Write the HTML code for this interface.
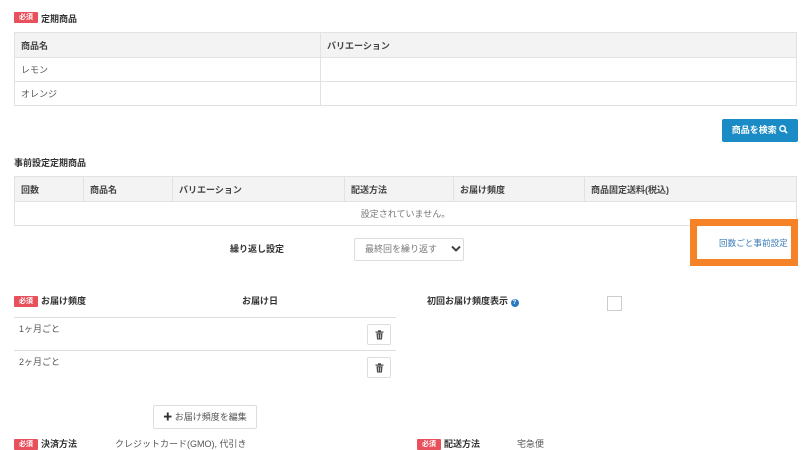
<!DOCTYPE html><html><head><meta charset="utf-8"><style>
*{box-sizing:border-box;margin:0;padding:0}
body{width:809px;height:450px;background:#fff;font-family:"Liberation Sans","Noto Sans CJK JP",sans-serif;font-size:9px;color:#555;position:relative;overflow:hidden}
.a{position:absolute;white-space:nowrap}
.b{position:absolute;background:#e8505b;color:#fff;font-size:7px;font-weight:bold;width:24px;height:11px;line-height:11px;text-align:center;border-radius:1px}
.l{font-weight:bold;color:#333}
table{position:absolute;border-collapse:collapse;left:14px;width:783px}
td,th{border:1px solid #e2e2e2;text-align:left;font-weight:normal;padding:0 6px}
th{background:#f3f3f3;font-weight:bold;color:#444}
.btn{position:absolute;border:1px solid #ddd;border-radius:2px;background:#fff}
</style></head><body>
<div class="b" style="left:14px;top:12px">必須</div><div class="a l" style="left:41px;top:12px">定期商品</div>
<table style="top:32px"><tr style="height:25px"><th style="width:306px">商品名</th><th>バリエーション</th></tr>
<tr style="height:24px"><td>レモン</td><td></td></tr><tr style="height:24px"><td>オレンジ</td><td></td></tr></table>
<div class="a" style="left:722px;top:119px;width:76px;height:23px;background:#1a8bc5;border-radius:2px;color:#fff;font-weight:bold;line-height:23px;text-align:center">商品を検索 <svg width="9" height="9" viewBox="0 0 10 10" style="vertical-align:-1px"><circle cx="4" cy="4" r="3" fill="none" stroke="#fff" stroke-width="1.6"/><path d="M6.2 6.2L9 9" stroke="#fff" stroke-width="1.8"/></svg></div>
<div class="a l" style="left:14px;top:156px">事前設定定期商品</div>
<table style="top:176px"><tr style="height:25px"><th style="width:69px">回数</th><th style="width:89px">商品名</th><th style="width:172px">バリエーション</th><th style="width:109px">配送方法</th><th style="width:131px">お届け頻度</th><th>商品固定送料(税込)</th></tr>
<tr style="height:24px"><td colspan="6" style="text-align:center;color:#777">設定されていません。</td></tr></table>
<div class="a l" style="left:230px;top:242px">繰り返し設定</div>
<div class="btn" style="left:354px;top:238px;width:110px;height:23px;line-height:21px;padding-left:10px;color:#777">最終回を繰り返す</div>
<svg class="a" style="left:451px;top:245px" width="10" height="8"><path d="M1 1.5L5 5.5L9 1.5" fill="none" stroke="#444" stroke-width="2"/></svg>
<div class="a" style="left:690px;top:219px;width:108px;height:47px;border:7px solid #f68228;background:#fff"></div>
<div class="a" style="left:719px;top:237px;color:#3a7bb8;font-size:8.6px">回数ごと事前設定</div>
<div class="b" style="left:14px;top:296px">必須</div><div class="a l" style="left:41px;top:294px">お届け頻度</div>
<div class="a l" style="left:242px;top:294px">お届け日</div>
<div class="a l" style="left:427px;top:294px">初回お届け頻度表示 <span style="display:inline-block;width:8px;height:8px;border-radius:50%;background:#2b79c2;color:#fff;font-size:6px;line-height:8px;text-align:center;vertical-align:0">?</span></div>
<div class="a" style="left:607px;top:296px;width:15px;height:15px;border:1px solid #ccc"></div>
<div class="a" style="left:14px;top:317px;width:382px;height:1px;background:#ddd"></div>
<div class="a" style="left:19px;top:322px">1ヶ月ごと</div>
<div class="btn" style="left:367px;top:324px;width:24px;height:21px"><svg style="position:absolute;left:7px;top:5px" width="9" height="10" viewBox="0 0 9 10"><rect x="0.5" y="1.5" width="8" height="1.2" fill="#444"/><rect x="3" y="0.3" width="3" height="1.2" fill="#444"/><path d="M1.5 3.2h6l-.5 6.3h-5z" fill="#444"/><path d="M3.3 4.2v4.3M5.7 4.2v4.3" stroke="#fff" stroke-width=".7"/></svg></div>
<div class="a" style="left:14px;top:350px;width:382px;height:1px;background:#ddd"></div>
<div class="a" style="left:19px;top:355px">2ヶ月ごと</div>
<div class="btn" style="left:367px;top:357px;width:24px;height:21px"><svg style="position:absolute;left:7px;top:5px" width="9" height="10" viewBox="0 0 9 10"><rect x="0.5" y="1.5" width="8" height="1.2" fill="#444"/><rect x="3" y="0.3" width="3" height="1.2" fill="#444"/><path d="M1.5 3.2h6l-.5 6.3h-5z" fill="#444"/><path d="M3.3 4.2v4.3M5.7 4.2v4.3" stroke="#fff" stroke-width=".7"/></svg></div>
<div class="btn" style="left:153px;top:405px;width:104px;height:24px;line-height:22px;text-align:center;color:#555"><b style="color:#333">✚</b> お届け頻度を編集</div>
<div class="b" style="left:14px;top:439px">必須</div><div class="a l" style="left:41px;top:437px">決済方法</div>
<div class="a" style="left:115px;top:437px">クレジットカード(GMO), 代引き</div>
<div class="b" style="left:417px;top:439px">必須</div><div class="a l" style="left:444px;top:437px">配送方法</div>
<div class="a" style="left:517px;top:437px">宅急便</div>
</body></html>
